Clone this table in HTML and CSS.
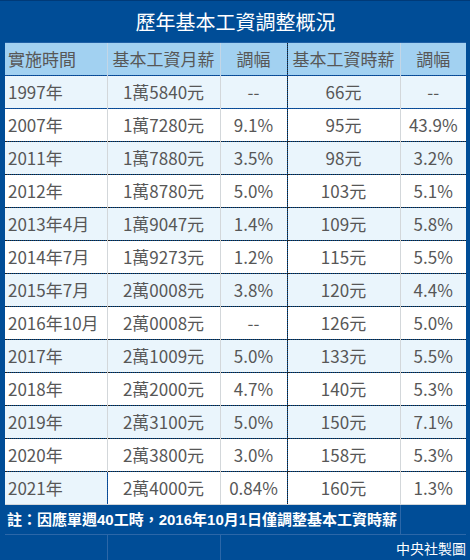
FILE: index.html
```html
<!DOCTYPE html>
<html lang="zh-Hant">
<head>
<meta charset="utf-8">
<link rel="stylesheet" href="styles.css">
</head>
<body>
<div class="frame">
  <div class="title">歷年基本工資調整概況</div>
  <table class="grid">
    <colgroup>
      <col class="c1"><col class="c2"><col class="c3"><col class="c4"><col class="c5">
    </colgroup>
    <thead>
      <tr><th class="left">實施時間</th><th>基本工資月薪</th><th>調幅</th><th>基本工資時薪</th><th>調幅</th></tr>
    </thead>
    <tbody>
      <tr class="alt first"><td class="left">1997年</td><td>1萬5840元</td><td>--</td><td>66元</td><td>--</td></tr>
      <tr><td class="left">2007年</td><td>1萬7280元</td><td>9.1%</td><td>95元</td><td>43.9%</td></tr>
      <tr class="alt"><td class="left">2011年</td><td>1萬7880元</td><td>3.5%</td><td>98元</td><td>3.2%</td></tr>
      <tr><td class="left">2012年</td><td>1萬8780元</td><td>5.0%</td><td>103元</td><td>5.1%</td></tr>
      <tr class="alt"><td class="left">2013年4月</td><td>1萬9047元</td><td>1.4%</td><td>109元</td><td>5.8%</td></tr>
      <tr><td class="left">2014年7月</td><td>1萬9273元</td><td>1.2%</td><td>115元</td><td>5.5%</td></tr>
      <tr class="alt"><td class="left">2015年7月</td><td>2萬0008元</td><td>3.8%</td><td>120元</td><td>4.4%</td></tr>
      <tr><td class="left">2016年10月</td><td>2萬0008元</td><td>--</td><td>126元</td><td>5.0%</td></tr>
      <tr class="alt"><td class="left">2017年</td><td>2萬1009元</td><td>5.0%</td><td>133元</td><td>5.5%</td></tr>
      <tr><td class="left">2018年</td><td>2萬2000元</td><td>4.7%</td><td>140元</td><td>5.3%</td></tr>
      <tr class="alt"><td class="left">2019年</td><td>2萬3100元</td><td>5.0%</td><td>150元</td><td>7.1%</td></tr>
      <tr><td class="left">2020年</td><td>2萬3800元</td><td>3.0%</td><td>158元</td><td>5.3%</td></tr>
      <tr class="last"><td class="left sel">2021年</td><td>2萬4000元</td><td>0.84%</td><td>160元</td><td>1.3%</td></tr>
    </tbody>
    <tfoot>
      <tr class="note"><td colspan="4" class="note-text">註：因應單週40工時，2016年10月1日僅調整基本工資時薪</td><td></td></tr>
      <tr class="credit"><td></td><td></td><td colspan="3" class="credit-text">中央社製圖</td></tr>
    </tfoot>
  </table>
</div>
</body>
</html>
```

FILE: styles.css
```css
html, body {
  margin: 0;
  padding: 0;
  background: #004d97;
}
.frame {
  width: 470px;
  height: 560px;
  box-sizing: border-box;
  padding: 0 4px 0 5px;
  background: #004d97;
  border-top: 1px solid #003a78;
  font-family: "Noto Sans CJK TC", "Noto Sans", sans-serif;
  overflow: hidden;
}
.title {
  height: 41px;
  display: flex;
  align-items: center;
  justify-content: center;
  color: #ffffff;
  font-size: 20px;
  letter-spacing: 0;
  border-bottom: 1px solid #1e60a6;
}
.grid {
  width: 461px;
  border-collapse: collapse;
  table-layout: fixed;
}
.c1 { width: 102px; }
.c2 { width: 113px; }
.c3 { width: 67px; }
.c4 { width: 113px; }
.c5 { width: 66px; }
.grid th,
.grid td {
  padding: 0;
  height: 32px;
  text-align: center;
  font-size: 17px;
  font-weight: normal;
  color: #575757;
  white-space: nowrap;
  overflow: hidden;
  line-height: 32px;
}
.grid th {
  background: #a2d1f1;
  border-bottom: 1px dotted #1a4f9a;
  border-right: 1px solid #c3d6e6;
}
.grid th:nth-child(3) {
  border-right: 1px dotted #222;
}
.grid th:last-child { border-right: none; }
.grid .left {
  text-align: left;
  padding-left: 3px;
}
.grid tbody td {
  background: #ffffff;
  border-bottom: 1px dotted #222;
  border-right: 1px solid #d3d7da;
}
.grid tbody td:nth-child(3) {
  border-right: 1px dotted #222;
}
.grid tbody td:last-child { border-right: none; }
.grid tbody tr.alt td { background: #eaf5fc; }
.grid tbody tr.first td { border-bottom: 1px dotted #1a4f9a; }
.grid tbody tr.last td { border-bottom: 1px solid #d3d7da; }
.grid tbody tr.last td.sel {
  background: #eaf5fc;
  border-right: 1px dotted #1a4f9a;
}
.grid tfoot td {
  background: #004d97;
  color: #ffffff;
  border: none;
}
.grid tfoot tr.note td {
  height: 29px;
  line-height: 29px;
  border-bottom: 1px solid #2c67a8;
}
.grid tfoot tr.note td.note-text {
  text-align: left;
  padding-left: 2px;
  font-size: 15px;
  font-weight: bold;
  font-family: "Liberation Sans", "Noto Sans CJK TC", sans-serif;
  border-right: 1px solid #2c67a8;
  overflow: visible;
}
.grid tfoot tr.credit td {
  height: 26px;
  line-height: 26px;
  border-right: 1px solid #2c67a8;
}
.grid tfoot tr.credit td.credit-text {
  text-align: right;
  font-size: 14px;
  border-right: none;
  padding-right: 0;
}
```
